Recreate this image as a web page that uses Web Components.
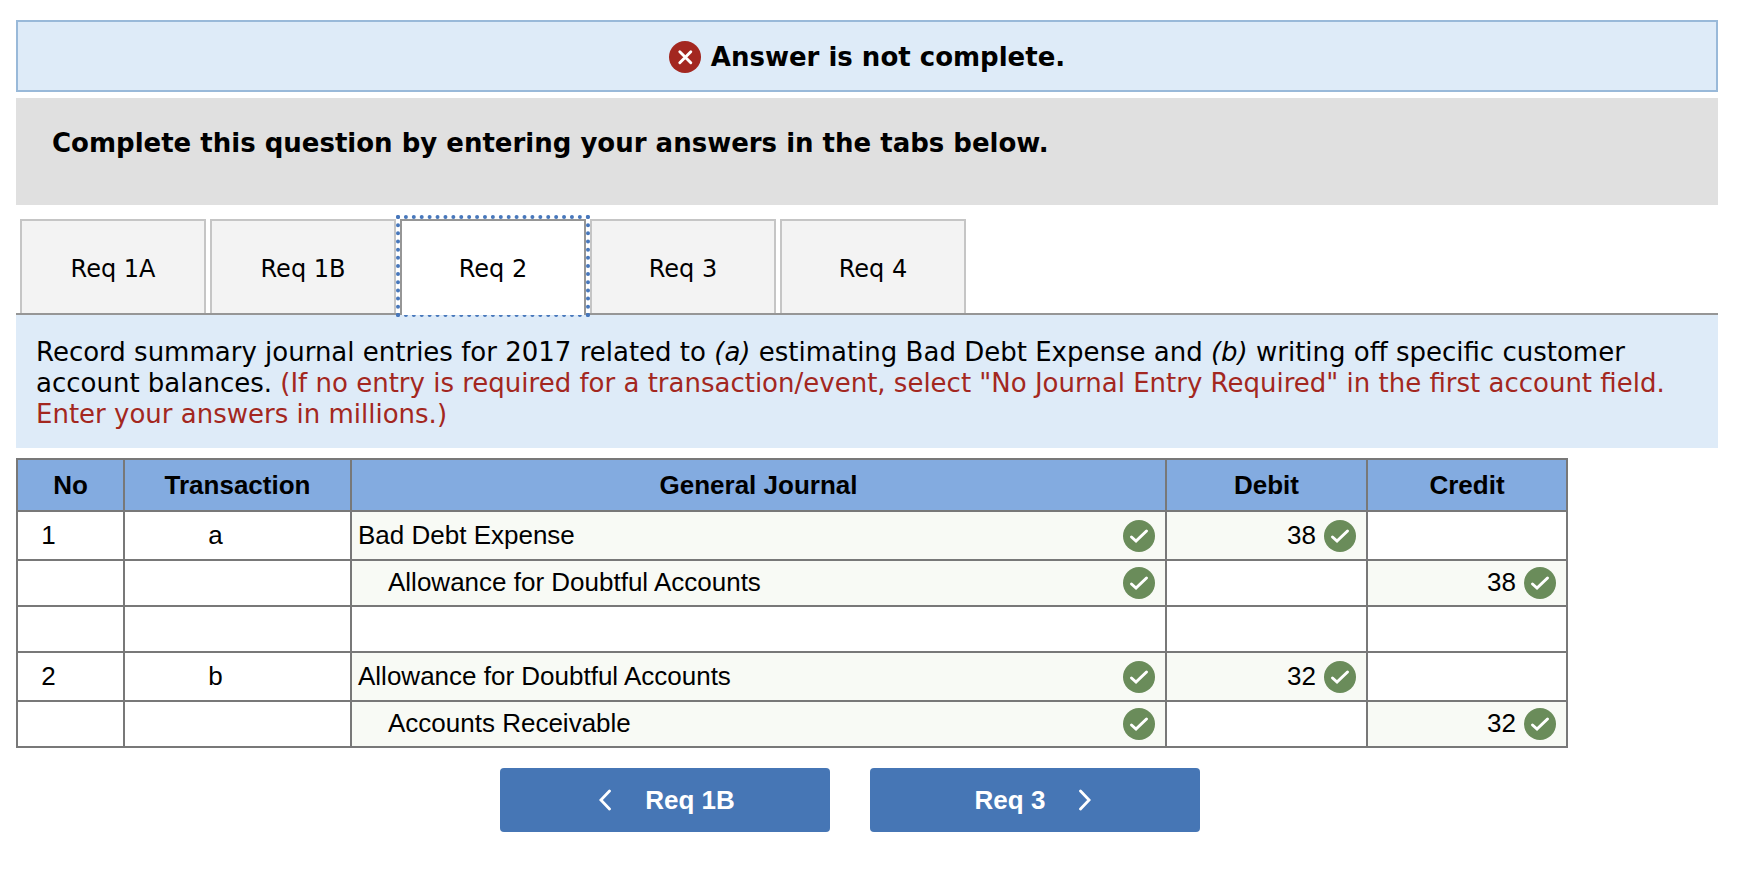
<!DOCTYPE html>
<html lang="en">
<head>
<meta charset="utf-8">
<meta name="viewport" content="width=device-width, initial-scale=1">
<title>Journal entries</title>
<style>
  body {
    margin: 0;
    padding: 20px 26px 20px 16px;
    background: #fff;
    color: #000;
    font: 26px/31px Verdana, "DejaVu Sans", sans-serif;
  }
</style>
</head>
<body>
<status-banner>Answer is not complete.</status-banner>
<question-intro>Complete this question by entering your answers in the tabs below.</question-intro>
<req-tabs>
  <req-tab>Req 1A</req-tab>
  <req-tab>Req 1B</req-tab>
  <req-tab selected>Req 2</req-tab>
  <req-tab>Req 3</req-tab>
  <req-tab>Req 4</req-tab>
</req-tabs>
<task-panel>Record summary journal entries for 2017 related to <i>(a)</i> estimating Bad Debt Expense and <i>(b)</i> writing off specific customer account balances. <span slot="hint">(If no entry is required for a transaction/event, select "No Journal Entry Required" in the first account field. Enter your answers in millions.)</span></task-panel>
<journal-table></journal-table>
<req-nav>
  <nav-button direction="prev">Req 1B</nav-button>
  <nav-button direction="next">Req 3</nav-button>
</req-nav>

<script>
const define = (name, html, setup) => {
  const template = document.createElement("template");
  template.innerHTML = html;
  customElements.define(name, class extends HTMLElement {
    constructor() {
      super();
      this.attachShadow({ mode: "open" }).append(template.content.cloneNode(true));
    }
    connectedCallback() {
      if (setup) setup(this, this.shadowRoot);
    }
  });
};

define("status-icon", `
  <style>
    :host { display: block; flex: none; width: 32px; height: 32px; }
    svg { display: block; }
    .wrong, :host([kind="wrong"]) .right { display: none; }
    :host([kind="wrong"]) .wrong { display: block; }
  </style>
  <svg class="right" width="32" height="32" viewBox="0 0 32 32" role="img" aria-label="Correct">
    <circle cx="16" cy="16" r="16" fill="#6a8c5a"/>
    <path d="M8.5 17 13 21 23.500 11" fill="none" stroke="#fff" stroke-width="3" stroke-linecap="round"/>
  </svg>
  <svg class="wrong" width="32" height="32" viewBox="0 0 32 32" role="img" aria-label="Incorrect">
    <circle cx="16" cy="16" r="16" fill="#a32720"/>
    <path d="M10.800 10.800 21.800 21.800M21.800 10.800 10.800 21.800" fill="none" stroke="#fff" stroke-width="2.900" stroke-linecap="round"/>
  </svg>`);

define("status-banner", `
  <style>
    :host {
      display: flex; align-items: center; justify-content: center; gap: 10px;
      box-sizing: border-box; min-height: 72px; margin-bottom: 6px; padding-top: 2px;
      border: 2px solid #99b9d9; background: #deebf8; font-weight: bold;
    }
  </style>
  <status-icon kind="wrong"></status-icon><span><slot></slot></span>`);

define("question-intro", `
  <style>
    :host { display: block; padding: 30px 36px 46px; margin-bottom: 14px; background: #e0e0e0; font-weight: bold; }
  </style>
  <slot></slot>`);

define("req-tabs", `
  <style>
    :host { display: block; padding: 0 4px; border-bottom: 2px solid #969696; }
    div { display: flex; gap: 4px; }
  </style>
  <div role="tablist"><slot></slot></div>`);

define("req-tab", `
  <style>
    :host { display: block; position: relative; width: 186px; font-size: 24px; }
    button {
      display: block; box-sizing: border-box; width: 100%; height: 94px; padding: 4px 0 0;
      border: 2px solid #c5c5c5; border-bottom: 0; border-radius: 0;
      background: #f3f3f3; color: inherit; font: inherit;
    }
    :host([selected]) button { border-color: #969696; background: #fff; outline: 4px dotted #4777bb; }
    /* Joins the open tab to the panel by covering the line below it. */
    :host([selected])::after {
      content: ""; position: absolute; z-index: 1; left: 0; right: 0; bottom: -2px; height: 2px;
      box-sizing: border-box; border: solid #969696; border-width: 0 2px; background: #fff;
    }
  </style>
  <button type="button" role="tab"><slot></slot></button>`,
  (host, root) => root.querySelector("button").setAttribute("aria-selected", host.hasAttribute("selected")));

define("task-panel", `
  <style>
    :host { display: block; padding: 22px 20px 18px; margin-bottom: 10px; background: #deebf8; }
    p { margin: 0; }
    .hint { color: #a32720; }
  </style>
  <p><slot></slot><span class="hint"><slot name="hint"></slot></span></p>`);

define("journal-table", `
  <style>
    :host { display: block; font: 26px/30px Arial, "Liberation Sans", sans-serif; }
    table { width: 100%; max-width: 1552px; table-layout: fixed; border-collapse: collapse; }
    .no { width: 107px; } .tr { width: 227px; } .db { width: 201px; } .cr { width: 200px; }
    th, td { box-sizing: border-box; height: 46px; padding: 0; border: 2px solid #787878; }
    th { height: 52px; background: #83abe0; }
    .first td { height: 49px; }
    .key { padding: 0 44px 2px 0; text-align: center; }
    .done { background: #f8faf5; }
    .cell { display: flex; align-items: center; justify-content: space-between; gap: 8px; padding: 0 10px 0 6px; }
    .cell span { padding-bottom: 2px; }
    .sub .cell { padding-left: 36px; }
    .cell.amount { justify-content: flex-end; }
  </style>
  <table>
    <colgroup><col class="no"><col class="tr"><col><col class="db"><col class="cr"></colgroup>
    <thead><tr><th scope="col">No</th><th scope="col">Transaction</th><th scope="col">General Journal</th><th scope="col">Debit</th><th scope="col">Credit</th></tr></thead>
    <tbody></tbody>
  </table>`,
  (host, root) => {
    const entries = [
      ["1", "a", "Bad Debt Expense", "38", ""],
      ["", "", "Allowance for Doubtful Accounts", "", "38"],
      ["", "", "", "", ""],
      ["2", "b", "Allowance for Doubtful Accounts", "32", ""],
      ["", "", "Accounts Receivable", "", "32"]
    ];
    const graded = (text, kind) => text
      ? `<td class="done"><div class="cell ${kind}"><span>${text}</span><status-icon></status-icon></div></td>`
      : "<td></td>";
    root.querySelector("tbody").innerHTML = entries.map(([no, key, account, debit, credit]) =>
      `<tr class="${no ? "first" : "sub"}"><td class="key">${no}</td><td class="key">${key}</td>` +
      graded(account, "account") + graded(debit, "amount") + graded(credit, "amount") + "</tr>").join("");
  });

define("req-nav", `
  <style>
    :host { display: block; }
    nav { display: flex; justify-content: center; gap: 40px; padding: 20px 34px 0 0; }
  </style>
  <nav aria-label="Requirements"><slot></slot></nav>`);

define("nav-button", `
  <style>
    :host { display: block; width: 330px; }
    button {
      display: flex; align-items: center; justify-content: center; gap: 34px;
      width: 100%; height: 64px; padding: 0 0 0 4px; border: 0; border-radius: 4px;
      background: #4676b5; color: #fff; font: bold 26px/30px Arial, "Liberation Sans", sans-serif;
    }
    :host([direction="next"]) button { flex-direction: row-reverse; padding: 0 4px 0 0; }
    :host([direction="next"]) .left, .right { display: none; }
    :host([direction="next"]) .right { display: inline; }
    svg { flex: none; }
  </style>
  <button type="button">
    <svg width="12" height="22" viewBox="0 0 12 22" fill="none" stroke="#fff" stroke-width="2.800" stroke-linecap="round" aria-hidden="true">
      <path class="left" d="M10.500 2 1.900 11 10.500 20"/>
      <path class="right" d="M1.500 2 10.100 11 1.500 20"/>
    </svg>
    <span><slot></slot></span>
  </button>`);
</script>
</body>
</html>
